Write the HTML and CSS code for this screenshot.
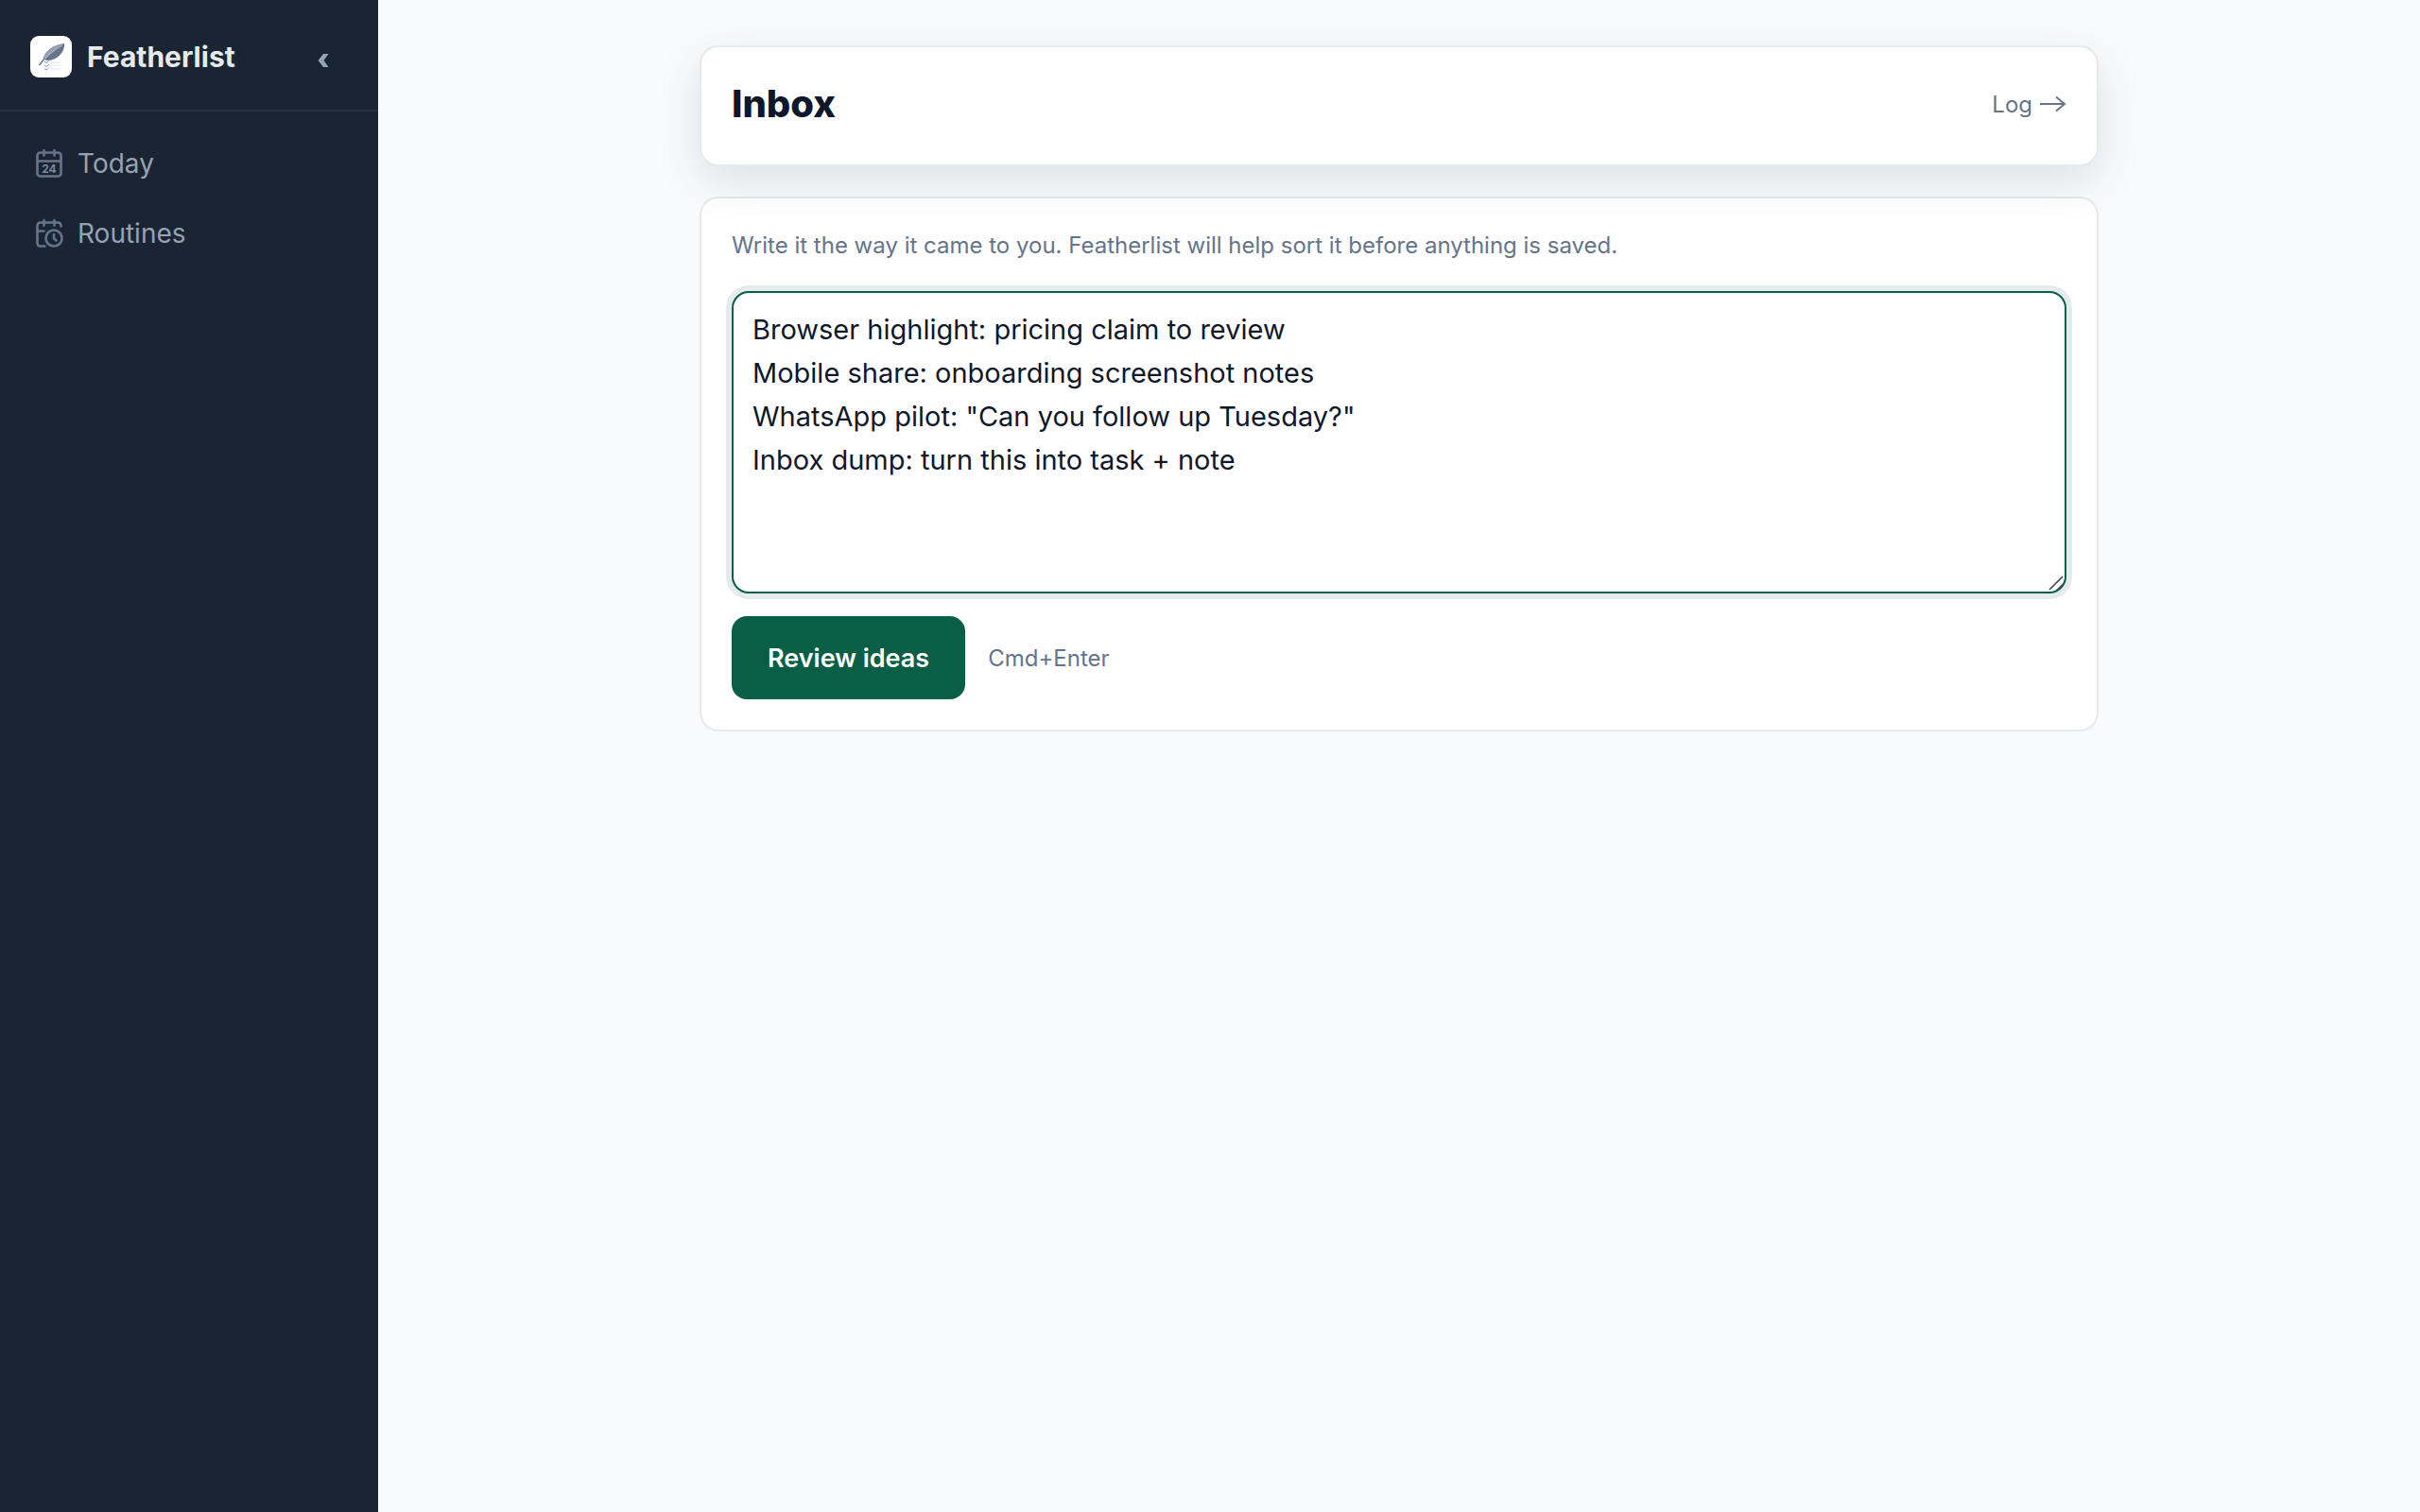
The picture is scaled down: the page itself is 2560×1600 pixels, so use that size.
FILE: index.html
```html
<!DOCTYPE html>
<html lang="en">
<head>
<meta charset="utf-8">
<meta name="viewport" content="width=device-width, initial-scale=1">
<title>Inbox - Featherlist</title>
<link rel="stylesheet" href="styles.css">
</head>
<body>
<div class="app">
  <aside class="sidebar">
    <div class="brand">
      <svg class="brand-logo" viewBox="0 0 44 44" aria-hidden="true">
        <rect width="44" height="44" rx="9" fill="#fff"/>
        <path d="M14 24C15 17 23 10 36 8C37 14 32 22 24 25C20 26.500 17 26 15 25Z" fill="#66758c"/>
        <path d="M14 24C15 17 23 10 36 8C30 13 23 17 15 25Z" fill="#94a0b2"/>
        <path d="M15 25C22 17 28 13 34 10" fill="none" stroke="#c5ccd6" stroke-width=".7"/>
        <path d="M15 24L9.500 31" fill="none" stroke="#66758c" stroke-width="1.600"/>
        <path d="M15 27l2 1.500 2.500-2M15 31l2 1.500 2.500-2M15 34.500l2 1.500 2.500-2" fill="none" stroke="#8793a5" stroke-width="1"/>
        <path d="M21 28h12M21 31.500h12M21 35h11" stroke="#e9edf2" stroke-width="1.500"/>
      </svg>
      <span class="brand-name">Featherlist</span>
      <button class="collapse" type="button" aria-label="Collapse sidebar">
        <svg viewBox="0 0 12 16" aria-hidden="true"><path d="M6 1H11.500L6.500 8L11.500 15H6L.5 8Z" fill="#94a3b8"/></svg>
      </button>
    </div>
    <nav class="nav">
      <a class="nav-link" href="#today">
        <svg viewBox="0 0 32 32" aria-hidden="true">
          <g fill="none" stroke="currentColor" stroke-width="2.600" stroke-linecap="round" stroke-linejoin="round"><rect x="3.500" y="4.500" width="25" height="25" rx="3"/><path d="M10.500 2v5.500M21.500 2v5.500M3.500 13.500h25"/></g>
          <text class="day" x="16" y="25.500" text-anchor="middle">24</text>
        </svg>
        <span>Today</span>
      </a>
      <a class="nav-link" href="#routines">
        <svg viewBox="0 0 32 32" aria-hidden="true">
          <g fill="none" stroke="currentColor" stroke-width="2.600" stroke-linecap="round" stroke-linejoin="round"><path d="M28.500 8.500v-1a3 3 0 0 0-3-3h-19a3 3 0 0 0-3 3v19a3 3 0 0 0 3 3h5M10.500 2v5.500M21.500 2v5.500M3.500 13.500h7"/><circle cx="21" cy="21" r="8.500"/><path d="M21 17v4.500l2.500 2"/></g>
        </svg>
        <span>Routines</span>
      </a>
    </nav>
  </aside>
  <main class="main">
    <div class="content">
      <header class="card page-head">
        <h1>Inbox</h1>
        <a class="log" href="#log">Log
          <svg viewBox="0 0 28 18" aria-hidden="true"><path d="M0 9H26M17 1.500L26 9L17 16.500" fill="none" stroke="currentColor" stroke-width="2"/></svg>
        </a>
      </header>
      <form class="card capture">
        <label class="hint" for="ideas">Write it the way it came to you. Featherlist will help sort it before anything is saved.</label>
        <div class="field">
          <textarea id="ideas" spellcheck="false">Browser highlight: pricing claim to review
Mobile share: onboarding screenshot notes
WhatsApp pilot: "Can you follow up Tuesday?"
Inbox dump: turn this into task + note</textarea>
          <svg class="grip" viewBox="0 0 18 18" aria-hidden="true"><path d="M2 16L16 2M10 16.500L16.500 10" stroke="#474b5c" stroke-width="1.700"/></svg>
        </div>
        <div class="actions">
          <button class="primary" type="button">Review ideas</button>
          <span class="shortcut">Cmd+Enter</span>
        </div>
      </form>
    </div>
  </main>
</div>
</body>
</html>
```
FILE: styles.css
```css
* { box-sizing: border-box; }
body {
  margin: 0;
  background: #f9fafc;
  color: #0f172a;
  font-family: Inter, "Liberation Sans", sans-serif;
}
a { color: inherit; text-decoration: none; }
button, textarea { font: inherit; }

.app { display: flex; min-height: 100vh; }

.sidebar { flex: 0 0 400px; background: #1b2432; }
.brand {
  display: flex;
  align-items: center;
  gap: 16px;
  height: 118px;
  padding: 4px 48px 0 32px;
  border-bottom: 2px solid #283342;
}
.brand-logo { width: 44px; height: 44px; }
.brand-name {
  flex: 1;
  color: #e5eaec;
  font-size: 30px;
  font-weight: 700;
  line-height: 40px;
}
.collapse {
  display: flex;
  padding: 8px 4px 0 8px;
  border: 0;
  background: none;
}
.collapse svg { width: 12px; height: 16px; }

.nav { padding: 18px 16px; }
.nav-link {
  display: flex;
  align-items: center;
  gap: 14px;
  height: 74px;
  padding: 0 20px;
  color: #94a3b2;
  font-size: 28px;
}
.nav-link svg { width: 32px; height: 32px; color: #64748b; }
.day { fill: #7b899c; font-size: 12px; font-weight: 700; }

.main { flex: 1; padding: 48px; }
.content {
  display: flex;
  flex-direction: column;
  gap: 32px;
  max-width: 1480px;
  margin: 0 auto;
}
.card {
  background: #fff;
  border: 2px solid #e5eaec;
  border-radius: 20px;
}
.page-head {
  position: relative;
  display: flex;
  align-items: center;
  justify-content: space-between;
  padding: 36px 32px 40px;
  box-shadow: 0 16px 48px rgba(20, 60, 70, .12);
}
h1 { margin: 0; font-size: 40px; font-weight: 800; line-height: 48px; }
.log {
  display: flex;
  align-items: center;
  gap: 8px;
  color: #64748b;
  font-size: 24px;
}
.log svg { width: 28px; height: 18px; }

.capture { padding: 32px; }
.hint {
  display: block;
  margin-bottom: 30px;
  color: #64748b;
  font-size: 24px;
  line-height: 36px;
}
.field { position: relative; }
textarea {
  display: block;
  width: 100%;
  height: 320px;
  padding: 16px 20px;
  border: 2px solid #065f46;
  border-radius: 18px;
  outline: none;
  box-shadow: 0 0 0 6px #e5eaec;
  background: #fff;
  color: #0f172a;
  font-size: 29px;
  line-height: 46px;
  resize: none;
}
.grip { position: absolute; right: 2px; bottom: 2px; width: 18px; height: 18px; }
.actions { display: flex; align-items: center; gap: 24px; margin-top: 24px; }
.primary {
  height: 88px;
  padding: 0 38px;
  border: 0;
  border-radius: 16px;
  background: #085f46;
  color: #fff;
  font-size: 27px;
  font-weight: 600;
}
.shortcut { color: #64748b; font-size: 24px; }
```
